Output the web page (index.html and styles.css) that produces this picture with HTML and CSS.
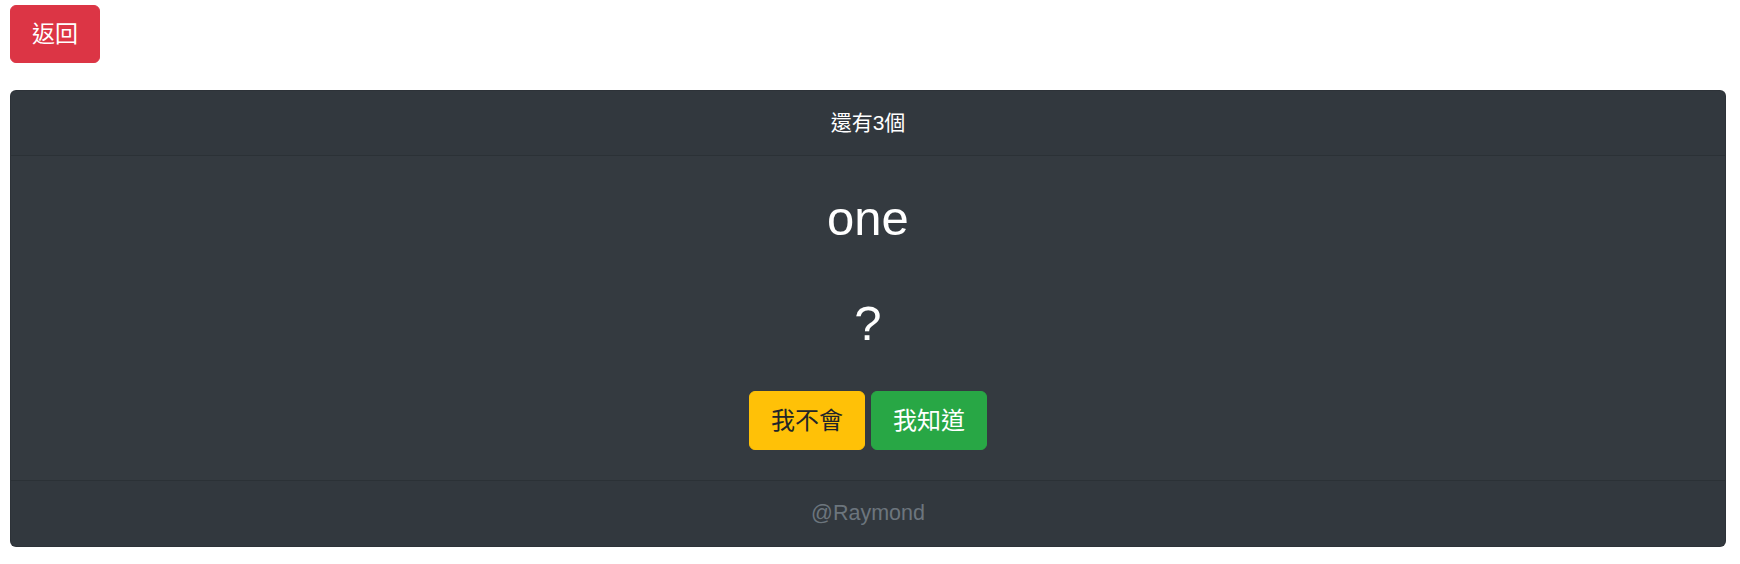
FILE: index.html
```html
<!DOCTYPE html>
<html lang="zh-Hant">
<head>
<meta charset="utf-8">
<title>Quiz</title>
<link rel="stylesheet" href="styles.css">
</head>
<body>
<div class="page">
  <div class="top">
    <button class="btn btn-red">返回</button>
  </div>
  <div class="card">
    <div class="card-header">還有3個</div>
    <div class="card-body">
      <div class="word">one</div>
      <div class="word answer">?</div>
      <div class="actions">
        <button class="btn btn-lg btn-yellow">我不會</button>
        <button class="btn btn-lg btn-green">我知道</button>
      </div>
    </div>
    <div class="card-footer">@Raymond</div>
  </div>
</div>
</body>
</html>
```

FILE: styles.css
```css
* { box-sizing: border-box; }
html, body { margin: 0; padding: 0; background: #fff; }
body {
  font-family: "Liberation Sans", Arial, "Noto Sans CJK TC", sans-serif;
  color: #212529;
}
.page {
  padding: 5px 14px 0 10px;
}
.top {
  display: flex;
  margin-bottom: 27px;
}
.btn {
  font-family: "Liberation Sans", Arial, "Noto Sans CJK TC", sans-serif;
  font-size: 23px;
  line-height: 34px;
  padding: 11px 21px;
  border: 1px solid transparent;
  border-radius: 6px;
  cursor: pointer;
}
.btn-lg {
  font-size: 24px;
  line-height: 35px;
}
.btn-red { background: #dc3545; border-color: #dc3545; color: #fff; }
.btn-yellow { background: #ffc107; border-color: #ffc107; color: #212529; }
.btn-green { background: #28a745; border-color: #28a745; color: #fff; }
.card {
  background: #343a40;
  border: 1px solid rgba(0,0,0,.125);
  border-radius: 6px;
  color: #fff;
  text-align: center;
  overflow: hidden;
}
.card-header {
  background: rgba(0,0,0,.03);
  border-bottom: 1px solid rgba(0,0,0,.125);
  font-size: 21px;
  line-height: 32px;
  padding: 16px 20px 16px;
}
.card-body {
  display: flex;
  flex-direction: column;
  align-items: center;
  padding: 33px 20px 30px;
}
.word {
  font-size: 49px;
  line-height: 59px;
}
.answer {
  margin-top: 46px;
}
.actions {
  display: flex;
  gap: 6px;
  margin-top: 38px;
}
.card-footer {
  background: rgba(0,0,0,.03);
  border-top: 1px solid rgba(0,0,0,.125);
  color: #6c757d;
  font-size: 21.5px;
  line-height: 32px;
  padding: 16px 20px 17px;
}
```
